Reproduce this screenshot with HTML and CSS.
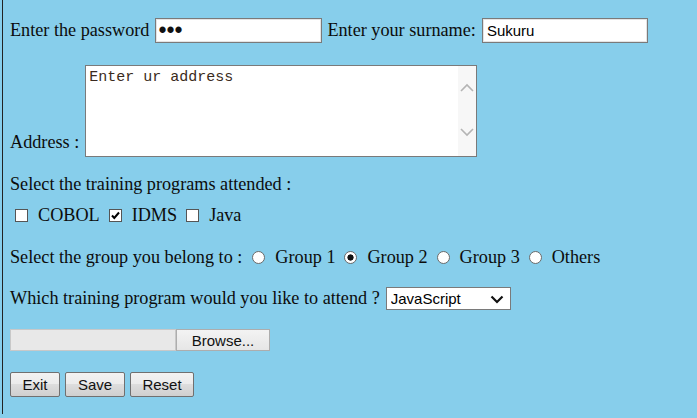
FILE: index.html
```html
<!DOCTYPE html>
<html>
<head>
<meta charset="utf-8">
<link rel="stylesheet" href="styles.css">
</head>
<body>
<div class="page">
  <div class="row row-top">
    <span class="lbl">Enter the password</span>
    <input class="txt pwd" type="password" value="abc">
    <span class="lbl">Enter your surname:</span>
    <input class="txt sur" type="text" value="Sukuru">
  </div>
  <div class="row row-addr">
    <span class="lbl addr-lbl">Address :</span>
    <div class="ta-box">
      <textarea class="ta">Enter ur address</textarea>
      <div class="sbar">
        <svg width="16" height="12" viewBox="0 0 16 12"><path d="M2 9 L8 3 L14 9" fill="none" stroke="#b4b4b4" stroke-width="1.6"/></svg>
        <svg width="16" height="12" viewBox="0 0 16 12"><path d="M2 3 L8 9 L14 3" fill="none" stroke="#b4b4b4" stroke-width="1.6"/></svg>
      </div>
    </div>
  </div>
  <div class="line row-prog">Select the training programs attended :</div>
  <div class="row row-checks">
    <input class="cb" type="checkbox"><span class="opt">COBOL</span>
    <input class="cb" type="checkbox" checked><span class="opt">IDMS</span>
    <input class="cb" type="checkbox"><span class="opt">Java</span>
  </div>
  <div class="row row-radios">
    <span class="lbl">Select the group you belong to :</span>
    <input class="rd" type="radio" name="g"><span class="opt">Group 1</span>
    <input class="rd" type="radio" name="g" checked><span class="opt">Group 2</span>
    <input class="rd" type="radio" name="g"><span class="opt">Group 3</span>
    <input class="rd" type="radio" name="g"><span class="opt">Others</span>
  </div>
  <div class="row row-select">
    <span class="lbl">Which training program would you like to attend ?</span>
    <select class="sel"><option>JavaScript</option></select>
  </div>
  <div class="row row-file">
    <span class="file-field"></span><button class="browse" type="button">Browse...</button>
  </div>
  <div class="row row-btns">
    <button class="btn b-exit" type="button">Exit</button>
    <button class="btn b-save" type="button">Save</button>
    <button class="btn b-reset" type="button">Reset</button>
  </div>
</div>
</body>
</html>
```
FILE: styles.css
```css
html, body {
  margin: 0;
  padding: 0;
  background: #87ceeb;
}
body {
  width: 697px;
  height: 418px;
  overflow: hidden;
  font-family: "Liberation Serif", "Times New Roman", serif;
  font-size: 18.2px;
  color: #0c0c0c;
}
.page {
  margin-left: 2px;
  border-left: 1px solid #222;
  padding-left: 7px;
  height: 414px;
  display: flex;
  flex-direction: column;
  box-sizing: border-box;
}
.row {
  display: flex;
  align-items: center;
}
.line {
  line-height: 21px;
}
.row-top {
  margin-top: 18px;
  height: 25px;
}
.row-top .lbl { margin-right: 6px; }
.txt {
  box-sizing: border-box;
  height: 25px;
  border: 1px solid #7a7a7a;
  box-shadow: inset 0 0 0 1px #e4e4e4;
  font-family: "Liberation Sans", Arial, sans-serif;
  font-size: 15px;
  padding: 1px 4px;
  color: #000;
  background: #fff;
  outline: none;
}
.pwd { width: 167px; margin-right: 5px; font-size: 23px; padding-left: 2px; color: #111; }
.sur { width: 166px; }

.row-addr {
  margin-top: 22px;
  align-items: flex-end;
}
.addr-lbl {
  margin-right: 6px;
  margin-bottom: 4px;
  line-height: 21px;
}
.ta-box {
  box-sizing: border-box;
  width: 392px;
  height: 92px;
  border: 1px solid #7a7a7a;
  background: #fff;
  display: flex;
}
.ta {
  flex: 1;
  border: none;
  resize: none;
  outline: none;
  padding: 3px 3px;
  margin: 0;
  font-family: "Liberation Mono", "Courier New", monospace;
  font-size: 15px;
  line-height: 17px;
  color: #3a2a20;
  overflow: hidden;
}
.sbar {
  width: 18px;
  background: #f7f7f7;
  display: flex;
  flex-direction: column;
  justify-content: space-between;
  align-items: center;
  padding: 16px 0 18px;
}
.row-prog {
  margin-top: 17px;
}
.row-checks {
  margin-top: 10px;
  height: 21px;
}
.cb, .rd {
  -webkit-appearance: none;
  appearance: none;
  box-sizing: border-box;
  width: 13px;
  height: 13px;
  margin: 0;
  background: #fff;
  border: 1px solid #555;
}
.cb { margin-left: 5px; }
.cb:checked {
  background: #fff url("data:image/svg+xml,%3Csvg xmlns='http://www.w3.org/2000/svg' width='11' height='11' viewBox='0 0 11 11'%3E%3Cpath d='M2 5.5 L4.3 8 L9 2.5' fill='none' stroke='%23000' stroke-width='2'/%3E%3C/svg%3E") center/11px 11px no-repeat;
}
.row-checks .opt { margin: 0 4px 0 10px; }
.row-radios {
  margin-top: 21px;
  height: 21px;
}
.row-radios .lbl { margin-right: 10px; }
.rd {
  border-radius: 50%;
  width: 13px;
  height: 13px;
  border-color: #6a6a6a;
}
.rd:checked {
  background: radial-gradient(circle, #111 0 2.8px, #fff 3.4px);
}
.row-radios .opt { margin: 0 9px 0 10px; }
.row-select {
  margin-top: 19px;
  height: 23px;
}
.row-select .lbl { margin-right: 6px; }
.sel {
  -webkit-appearance: none;
  appearance: none;
  box-sizing: border-box;
  width: 125px;
  height: 23px;
  border: 1px solid #7a7a7a;
  border-radius: 0;
  font-family: "Liberation Sans", Arial, sans-serif;
  font-size: 15px;
  padding: 0 4px;
  color: #000;
  background: #fff url("data:image/svg+xml,%3Csvg xmlns='http://www.w3.org/2000/svg' width='14' height='10' viewBox='0 0 14 10'%3E%3Cpath d='M1.5 2.5 L7 8 L12.5 2.5' fill='none' stroke='%23111' stroke-width='2.2'/%3E%3C/svg%3E") right 6px center/14px 10px no-repeat;
}
.row-file {
  margin-top: 19px;
  height: 22px;
}
.file-field {
  box-sizing: border-box;
  width: 166px;
  height: 22px;
  background: #e8e8e8;
  border: 1px solid #c8c8c8;
}
.browse {
  box-sizing: border-box;
  width: 94px;
  height: 22px;
  margin: 0;
  border: 1px solid #adadad;
  border-radius: 0;
  background: linear-gradient(#f3f3f3, #e6e6e6);
  font-family: "Liberation Sans", Arial, sans-serif;
  font-size: 15px;
  color: #111;
  padding: 0;
}
.row-btns {
  margin-top: 21px;
  height: 25px;
  gap: 5px;
}
.btn {
  box-sizing: border-box;
  height: 25px;
  margin: 0;
  padding: 0;
  border: 1px solid #707070;
  border-radius: 2px;
  background: linear-gradient(#f2f2f2 0%, #ebebeb 50%, #dddddd 50%, #cfcfcf 100%);
  font-family: "Liberation Sans", Arial, sans-serif;
  font-size: 15px;
  color: #111;
}
.b-exit { width: 50px; }
.b-save { width: 60px; }
.b-reset { width: 64px; }
```
